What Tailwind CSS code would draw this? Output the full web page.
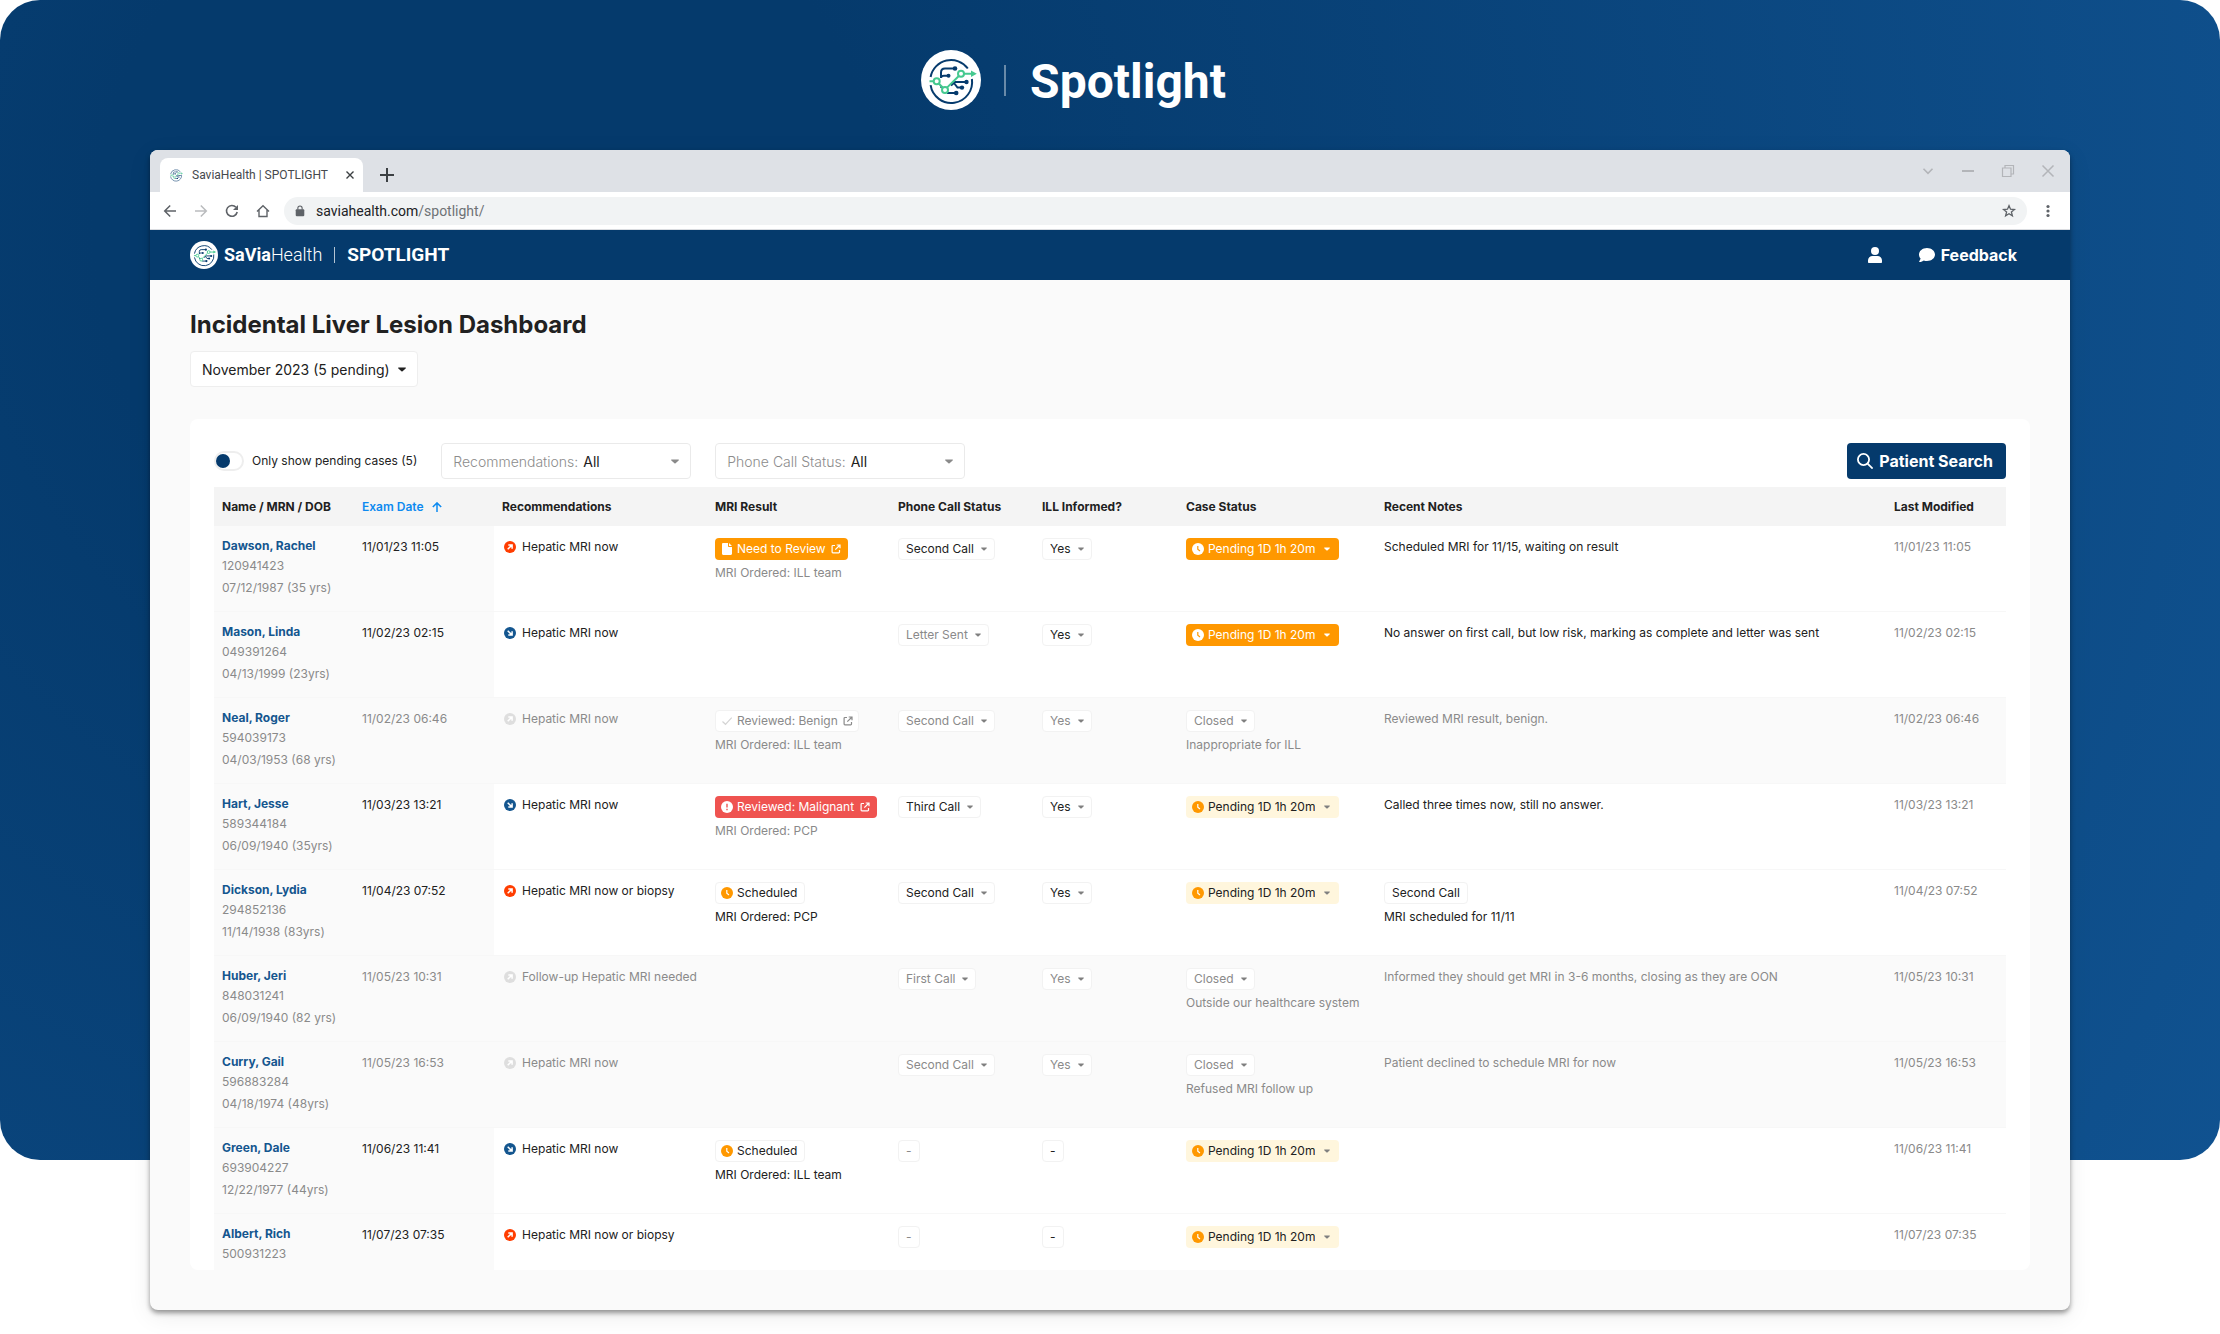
<!DOCTYPE html>
<html lang="en">
<head>
<meta charset="utf-8">
<meta name="viewport" content="width=device-width, initial-scale=1">
<title>SaviaHealth | SPOTLIGHT</title>
<script src="https://cdn.jsdelivr.net/npm/@tailwindcss/browser@4"></script>
</head>
<body class="bg-white font-['Inter',sans-serif] text-[#212121]">

<!-- Shared icons -->
<svg class="hidden" aria-hidden="true">
  <symbol id="logo" viewBox="0 0 60 60">
    <circle cx="30" cy="30" r="30" fill="#fff"/>
    <g fill="none" stroke="#063b6d" stroke-width="2">
      <path d="M9.6 27A20.8 20.8 0 0 1 46.800 18.500"/>
      <path d="M9.6 35.200A20.8 20.8 0 0 0 50.900 29"/>
      <path d="M20 28V22.500Q20 18.500 24 18.500H33M20 28Q20 25.700 23 25.700H27M45 32H34L30 35.500M33 33L36.500 37.600H40.500M35 43H26"/>
    </g>
    <g fill="#063b6d"><circle cx="34" cy="18.500" r="2.300"/><circle cx="27.500" cy="25.700" r="2"/><circle cx="45.500" cy="32" r="2.200"/><circle cx="41" cy="37.600" r="2.200"/><circle cx="35.200" cy="43" r="2.300"/><circle cx="20.500" cy="37" r="1.300"/></g>
    <g fill="#fff" stroke="#45c98f" stroke-width="2">
      <path d="M8.500 31.300H13M17.800 33.500L21.800 37.800M26 37.600L37.800 26M43 23.700H51" fill="none"/>
      <circle cx="15.700" cy="31.300" r="3"/><circle cx="24" cy="40" r="3"/><circle cx="40" cy="23.700" r="3"/>
    </g>
    <path d="M50 20.500L55.800 23.700L50 27z" fill="#45c98f"/>
  </symbol>
  <symbol id="caret" viewBox="0 0 10 6"><path d="M.8.6h8.400c.6 0 .8.6.4 1L5.700 5.300a1 1 0 0 1-1.400 0L.4 1.600C0 1.200.2.600.8.600z" fill="currentColor"/></symbol>
  <symbol id="clock" viewBox="0 0 12 12"><circle cx="6" cy="6" r="6" fill="currentColor"/><path d="M5.800 3v3.300L8 7.900" fill="none" stroke="var(--hand)" stroke-width="1.200"/></symbol>
  <symbol id="up" viewBox="0 0 12 12"><circle cx="6" cy="6" r="6" fill="currentColor"/><path d="M3.700 8.300L7.600 4.400M4.300 3.900H8.100V7.700" fill="none" stroke="#fff" stroke-width="1.500"/></symbol>
  <symbol id="down" viewBox="0 0 12 12"><circle cx="6" cy="6" r="6" fill="currentColor"/><path d="M3.700 3.700L7.600 7.600M8.100 4.300V8.100H4.300" fill="none" stroke="#fff" stroke-width="1.500"/></symbol>
  <symbol id="file" viewBox="0 0 10 12"><path d="M1.200 0H6v3.200c0 .5.300.8.800.8H10v6.800c0 .7-.5 1.200-1.200 1.200H1.200C.5 12 0 11.500 0 10.800V1.200C0 .5.500 0 1.200 0zM7 0l3 3H7z" fill="currentColor"/></symbol>
  <symbol id="check" viewBox="0 0 12 12"><path d="M1.500 6.500L4.500 9.300L10.700 2.700" fill="none" stroke="#d4d4d4" stroke-width="1.200"/></symbol>
  <symbol id="alert" viewBox="0 0 12 12"><circle cx="6" cy="6" r="6" fill="currentColor"/><path d="M6 2.800v3.800M6 7.800v1.400" fill="none" stroke="#ef5350" stroke-width="1.400"/></symbol>
  <symbol id="ext" viewBox="0 0 10 10"><path d="M4 1.500H1.900a.8.800 0 0 0-.8.800v5.800c0 .4.400.8.800.8h5.800c.4 0 .8-.4.800-.8V6M5.700 1h3.300v3.300M9 1L4.300 5.700" fill="none" stroke="currentColor" stroke-width="1.200"/></symbol>
</svg>

<div class="grid h-screen">
  <div class="col-start-1 row-start-1 mb-[174px] rounded-[40px] bg-[radial-gradient(circle_at_22%_20%,#053a6c_20%,#105290_100%)]"></div>

  <div class="col-start-1 row-start-1 flex min-h-0 flex-col px-[150px] pb-6">
    <header class="flex shrink-0 items-center justify-center pt-[50px] pb-10 pr-[73px]">
      <svg class="size-[60px]" aria-hidden="true"><use href="#logo"/></svg>
      <span class="ml-[23px] h-[31px] w-0.5 bg-white/40"></span>
      <h2 class="ml-6 pt-1 font-['Roboto',sans-serif] text-[48px] leading-[56px] font-bold text-white">Spotlight</h2>
    </header>

    <!-- Browser window -->
    <div class="flex min-h-0 flex-1 flex-col overflow-hidden rounded-lg bg-[#fafafa] shadow-[0_3px_5px_rgba(0,0,0,0.4),0_6px_24px_rgba(0,0,0,0.08)]">
      <div class="flex h-[42px] shrink-0 items-end bg-[#dee1e6] pl-2.5 pr-[15px] font-['Roboto',sans-serif]">
        <div class="flex h-[34px] w-[203px] items-center rounded-t-lg bg-white pl-2 pr-[7px]">
          <svg class="size-4 shrink-0" aria-hidden="true"><use href="#logo"/></svg>
          <span class="ml-2 flex-1 text-xs leading-5 whitespace-nowrap text-[#45494d]">SaviaHealth | SPOTLIGHT</span>
          <button class="p-0.5 text-[#3c4043]" aria-label="Close tab"><svg class="size-2" viewBox="0 0 8 8" aria-hidden="true"><path d="M.5.5l7 7M7.500.5l-7 7" stroke="currentColor" stroke-width="1.400"/></svg></button>
        </div>
        <button class="mb-2.5 ml-[17px] text-[#3c4043]" aria-label="New tab"><svg class="size-3.5" viewBox="0 0 14 14" aria-hidden="true"><path d="M7 0v14M0 7h14" stroke="currentColor" stroke-width="2"/></svg></button>
        <div class="mb-3.5 ml-auto flex items-center gap-[26px] text-[#b3b5b9]">
          <button aria-label="Search tabs"><svg class="size-3.5" viewBox="0 0 14 14" fill="none" stroke="currentColor" stroke-width="1.600" aria-hidden="true"><path d="M2.500 4.700L7 9.300l4.500-4.600"/></svg></button>
          <button aria-label="Minimize"><svg class="size-3.5" viewBox="0 0 14 14" fill="none" stroke="currentColor" stroke-width="1.800" aria-hidden="true"><path d="M1 7h12"/></svg></button>
          <button aria-label="Restore"><svg class="size-3.5" viewBox="0 0 14 14" fill="none" stroke="currentColor" stroke-width="1.200" aria-hidden="true"><path d="M1.500 4h8.500v8.500H1.500zM4 4V1.500h8.500V10H10"/></svg></button>
          <button aria-label="Close window"><svg class="size-3.5" viewBox="0 0 14 14" fill="none" stroke="currentColor" stroke-width="1.500" aria-hidden="true"><path d="M1.500 1.500l11 11M12.500 1.500l-11 11"/></svg></button>
        </div>
      </div>

      <div class="flex h-[38px] shrink-0 items-center border-b border-[#dadce0] bg-white pl-3 pr-3.5 font-['Roboto',sans-serif] text-[#5f6368]">
        <div class="flex items-center gap-[15px]">
          <button aria-label="Back"><svg class="size-4" viewBox="0 0 16 16" fill="none" stroke="currentColor" stroke-width="1.500" aria-hidden="true"><path d="M14 8H3M8.200 2.500L2.700 8l5.500 5.500"/></svg></button>
          <button class="text-[#babcbe]" aria-label="Forward"><svg class="size-4" viewBox="0 0 16 16" fill="none" stroke="currentColor" stroke-width="1.500" aria-hidden="true"><path d="M2 8h11M7.800 2.500L13.300 8l-5.500 5.500"/></svg></button>
          <button aria-label="Reload"><svg class="size-4" viewBox="0 0 16 16" fill="none" stroke="currentColor" stroke-width="1.600" aria-hidden="true"><path d="M13.200 9A5.400 5.400 0 1 1 12 4.300"/><path d="M14 2v5H9z" fill="currentColor" stroke="none"/></svg></button>
          <button aria-label="Home"><svg class="size-4" viewBox="0 0 16 16" fill="none" stroke="currentColor" stroke-width="1.400" aria-hidden="true"><path d="M2 8.500L8 2.700l6 5.800M4 7v6.500h8V7"/></svg></button>
        </div>
        <div class="ml-[13px] flex h-7 flex-1 items-center rounded-full bg-[#f1f3f4] px-2.5">
          <svg class="size-3" viewBox="0 0 12 14" aria-hidden="true"><path d="M2 5h8c.6 0 1 .4 1 1v6c0 .6-.4 1-1 1H2c-.6 0-1-.4-1-1V6c0-.6.400-1 1-1z" fill="currentColor"/><path d="M3.500 5.500V3.700a2.500 2.500 0 0 1 5 0v1.800" fill="none" stroke="currentColor" stroke-width="1.300"/></svg>
          <p class="ml-2.5 text-sm leading-5 text-[#6e7276]"><span class="text-[#202124]">saviahealth.com</span>/spotlight/</p>
          <button class="ml-auto" aria-label="Bookmark this page"><svg class="size-4" viewBox="0 0 16 16" fill="none" stroke="currentColor" stroke-width="1.300" aria-hidden="true"><path d="M8 2.600l1.500 3.600 3.900.3-3 2.500 1 3.800L8 10.800l-3.400 2 1-3.800-3-2.500 3.900-.3z"/></svg></button>
        </div>
        <button class="ml-[13px]" aria-label="Menu"><svg class="size-4" viewBox="0 0 16 16" fill="currentColor" aria-hidden="true"><circle cx="8" cy="3.500" r="1.600"/><circle cx="8" cy="8" r="1.600"/><circle cx="8" cy="12.500" r="1.600"/></svg></button>
      </div>

      <!-- App bar -->
      <nav class="flex h-[50px] shrink-0 items-center bg-[#053a6c] pl-10 pr-[53px] text-white">
        <a href="#" class="flex items-center font-['Roboto',sans-serif] text-lg leading-6">
          <svg class="size-7" aria-hidden="true"><use href="#logo"/></svg>
          <span class="ml-1.5"><b class="font-bold">SaVia</b><span class="font-light">Health</span></span>
          <span class="mx-3 h-4 w-px bg-white/70"></span>
          <span class="text-[19px] font-bold">SPOTLIGHT</span>
        </a>
        <a href="#" class="ml-auto" aria-label="Account"><svg class="h-4 w-3.5" viewBox="0 0 14 16" fill="currentColor" aria-hidden="true"><circle cx="7" cy="4" r="4"/><path d="M4.500 9h5A4.500 4.500 0 0 1 14 13.500V15.200c0 .5-.3.800-.8.800H.8c-.5 0-.8-.3-.8-.8V13.500A4.500 4.500 0 0 1 4.500 9z"/></svg></a>
        <a href="#" class="ml-[37px] flex items-center gap-1.5 text-base leading-6 font-bold"><svg class="size-4" viewBox="0 0 16 16" fill="currentColor" aria-hidden="true"><path d="M8 1c4.400 0 8 2.900 8 6.500S12.400 14 8 14c-1.200 0-2.200-.2-3.200-.6C3.800 14.200 2.200 15 .6 15c-.5 0-.7-.5-.4-.8 0 0 1-1 1.400-2.600C.6 10.400 0 9 0 7.500 0 3.900 3.600 1 8 1z"/></svg>Feedback</a>
      </nav>

      <main class="flex min-h-0 flex-1 flex-col items-start px-10 pt-7 pb-10">
        <h1 class="text-2xl leading-[34px] font-bold">Incidental Liver Lesion Dashboard</h1>
        <div class="mt-[9px] flex h-9 shrink-0 items-center gap-2 rounded border border-[#eeeeee] bg-white px-[11px] pt-px">
          <select class="field-sizing-content cursor-pointer appearance-none text-sm outline-none" aria-label="Month"><option>November 2023 (5 pending)</option><option>October 2023</option></select>
          <svg class="pointer-events-none h-[5px] w-2" aria-hidden="true"><use href="#caret"/></svg>
        </div>

        <section class="mt-8 min-h-0 w-full flex-1 overflow-hidden rounded-lg bg-white px-6 pt-6">
          <div class="flex h-9 items-center gap-6">
            <label class="flex cursor-pointer items-center gap-2 text-xs"><input type="checkbox" class="flex h-5 w-[30px] cursor-pointer appearance-none items-center rounded-full border-2 border-[#eeeeee] bg-white before:size-3.5 before:rounded-full before:bg-[#053a6c] checked:justify-end">Only show pending cases (5)</label>
            <label class="flex h-9 w-[250px] items-center rounded border border-[#eaeaea] px-[11px] pt-px text-sm"><span class="font-light text-[#8c8c8c]">Recommendations:</span><select class="ml-[5px] min-w-0 flex-1 appearance-none outline-none"><option>All</option><option>Hepatic MRI now</option></select><svg class="pointer-events-none h-[5px] w-2 shrink-0 text-[#8a8a8a]" aria-hidden="true"><use href="#caret"/></svg></label>
            <label class="flex h-9 w-[250px] items-center rounded border border-[#eaeaea] px-[11px] pt-px text-sm"><span class="font-light text-[#8c8c8c]">Phone Call Status:</span><select class="ml-[5px] min-w-0 flex-1 appearance-none outline-none"><option>All</option><option>First Call</option></select><svg class="pointer-events-none h-[5px] w-2 shrink-0 text-[#8a8a8a]" aria-hidden="true"><use href="#caret"/></svg></label>
            <button class="ml-auto flex h-9 items-center gap-1.5 rounded bg-[#053a6c] pl-2.5 pr-[13px] text-base font-bold text-white"><svg class="size-4" viewBox="0 0 16 16" fill="none" stroke="currentColor" stroke-width="1.800" aria-hidden="true"><circle cx="6.500" cy="6.500" r="5.600"/><path d="M10.600 10.600l5 5"/></svg>Patient Search</button>
          </div>

          <table class="mt-2 w-full table-fixed border-separate border-spacing-0 text-left text-xs">
            <thead>
              <tr class="h-[39px] bg-[#f4f4f4]">
                <th scope="col" class="w-[140px] px-2 font-bold">Name / MRN / DOB</th>
                <th scope="col" class="w-[140px] px-2 font-semibold text-[#0d8af0]"><span class="flex items-center gap-2">Exam Date<svg class="size-2.5" viewBox="0 0 10 10" fill="none" stroke="currentColor" stroke-width="1.500" aria-hidden="true"><path d="M5 10V1M.8 5L5 .9 9.200 5"/></svg></span></th>
                <th scope="col" class="w-[213px] px-2 font-bold">Recommendations</th>
                <th scope="col" class="w-[183px] px-2 font-bold">MRI Result</th>
                <th scope="col" class="w-36 px-2 font-bold">Phone Call Status</th>
                <th scope="col" class="w-36 px-2 font-bold">ILL Informed?</th>
                <th scope="col" class="w-[198px] px-2 font-bold">Case Status</th>
                <th scope="col" class="px-2 font-bold">Recent Notes</th>
                <th scope="col" class="w-[120px] px-2 font-bold">Last Modified</th>
              </tr>
            </thead>
            <tbody id="cases"></tbody>
          </table>
        </section>
      </main>
    </div>
  </div>
</div>

<script>
const cases = [
  { name: 'Dawson, Rachel', mrn: '120941423', dob: '07/12/1987 (35 yrs)', exam: '11/01/23 11:05', rec: 'Hepatic MRI now', dir: 'up', mri: 'review', ordered: 'ILL team', call: 'Second Call', ill: 'Yes', status: 'urgent', note: 'Scheduled MRI for 11/15, waiting on result' },
  { name: 'Mason, Linda', mrn: '049391264', dob: '04/13/1999 (23yrs)', exam: '11/02/23 02:15', rec: 'Hepatic MRI now', dir: 'down', call: 'Letter Sent', muted: true, ill: 'Yes', status: 'urgent', note: 'No answer on first call, but low risk, marking as complete and letter was sent' },
  { name: 'Neal, Roger', mrn: '594039173', dob: '04/03/1953 (68 yrs)', exam: '11/02/23 06:46', rec: 'Hepatic MRI now', dir: 'up', mri: 'benign', ordered: 'ILL team', call: 'Second Call', ill: 'Yes', closed: 'Inappropriate for ILL', note: 'Reviewed MRI result, benign.' },
  { name: 'Hart, Jesse', mrn: '589344184', dob: '06/09/1940 (35yrs)', exam: '11/03/23 13:21', rec: 'Hepatic MRI now', dir: 'down', mri: 'malignant', ordered: 'PCP', call: 'Third Call', ill: 'Yes', status: 'pending', note: 'Called three times now, still no answer.' },
  { name: 'Dickson, Lydia', mrn: '294852136', dob: '11/14/1938 (83yrs)', exam: '11/04/23 07:52', rec: 'Hepatic MRI now or biopsy', dir: 'up', mri: 'scheduled', ordered: 'PCP', call: 'Second Call', ill: 'Yes', status: 'pending', tag: 'Second Call', note: 'MRI scheduled for 11/11' },
  { name: 'Huber, Jeri', mrn: '848031241', dob: '06/09/1940 (82 yrs)', exam: '11/05/23 10:31', rec: 'Follow-up Hepatic MRI needed', dir: 'down', call: 'First Call', ill: 'Yes', closed: 'Outside our healthcare system', note: 'Informed they should get MRI in 3-6 months, closing as they are OON' },
  { name: 'Curry, Gail', mrn: '596883284', dob: '04/18/1974 (48yrs)', exam: '11/05/23 16:53', rec: 'Hepatic MRI now', dir: 'down', call: 'Second Call', ill: 'Yes', closed: 'Refused MRI follow up', note: 'Patient declined to schedule MRI for now' },
  { name: 'Green, Dale', mrn: '693904227', dob: '12/22/1977 (44yrs)', exam: '11/06/23 11:41', rec: 'Hepatic MRI now', dir: 'down', mri: 'scheduled', ordered: 'ILL team', call: '-', muted: true, ill: '-', status: 'pending', note: '' },
  { name: 'Albert, Rich', mrn: '500931223', dob: '', exam: '11/07/23 07:35', rec: 'Hepatic MRI now or biopsy', dir: 'up', call: '-', muted: true, ill: '-', status: 'pending', note: '' },
];

const icon = (id, cls) => `<svg class="${cls}" aria-hidden="true"><use href="#${id}"/></svg>`;

// Small drop-down chip; a value of "-" has nothing chosen and shows no caret.
const chip = (value, label, cls) => value === '-'
  ? `<button aria-label="${label}" class="flex h-[22px] w-fit items-center rounded border border-[#f2f2f2] bg-white px-[7px] ${cls}">-</button>`
  : `<div class="flex h-[22px] w-fit items-center gap-[7px] rounded border border-[#f2f2f2] bg-white px-[7px] ${cls}"><select aria-label="${label}" class="field-sizing-content appearance-none outline-none"><option>${value}</option></select>${icon('caret', 'pointer-events-none h-1 w-1.5 text-[#808080]')}</div>`;

const mriChips = {
  review: `<a href="#" class="flex h-[22px] w-fit items-center rounded bg-[#ff9800] px-[7px] text-white">${icon('file', 'h-3 w-2.5')}<span class="mx-[5px]">Need to Review</span>${icon('ext', 'size-2.5')}</a>`,
  benign: `<a href="#" class="flex h-[22px] w-fit items-center rounded border border-[#f2f2f2] bg-white px-[5px] text-[#8a8a8a]">${icon('check', 'size-3')}<span class="ml-1 mr-[5px]">Reviewed: Benign</span>${icon('ext', 'size-2.5')}</a>`,
  malignant: `<a href="#" class="flex h-[22px] w-fit items-center rounded bg-[#ef5350] pl-1.5 pr-[7px] text-white">${icon('alert', 'size-3')}<span class="ml-1 mr-[6px]">Reviewed: Malignant</span>${icon('ext', 'size-2.5')}</a>`,
  scheduled: `<span class="flex h-[22px] w-fit items-center gap-1 rounded border border-[#f2f2f2] bg-white pl-[5px] pr-[7px]">${icon('clock', 'size-3 text-[#ff9800] [--hand:#fff]')}Scheduled</span>`,
};

const statusChip = kind => {
  const tone = kind === 'urgent' ? 'bg-[#ff9800] text-white' : 'bg-[#fff6dd]';
  const clock = kind === 'urgent' ? 'size-3 text-white [--hand:#ff9800]' : 'size-3 text-[#ff9800] [--hand:#fff]';
  const caret = kind === 'urgent' ? 'pointer-events-none ml-[5px] h-1 w-1.5 text-white' : 'pointer-events-none ml-[5px] h-1 w-1.5 text-[#808080]';
  return `<div class="flex h-[22px] w-fit items-center gap-1 rounded pl-1.5 pr-[9px] ${tone}">${icon('clock', clock)}<select aria-label="Case status" class="field-sizing-content appearance-none outline-none"><option>Pending 1D 1h 20m</option></select>${icon('caret', caret)}</div>`;
};

const sub = (text, cls) => `<p class="mt-[3px] leading-5 ${cls}">${text}</p>`;

document.getElementById('cases').innerHTML = cases.map(c => {
  const text = c.closed ? 'text-[#8a8a8a]' : 'text-[#212121]';
  const callText = c.closed || c.muted ? 'text-[#8a8a8a]' : 'text-[#212121]';
  const cell = 'border-b border-[#f7f7f7] px-2';
  const badge = c.closed ? 'text-[#dedede]' : c.dir === 'up' ? 'text-[#ff3d00]' : 'text-[#14568f]';
  return `<tr class="h-[86px] align-top leading-5 ${c.closed ? 'bg-[#fafafa]' : 'bg-white'} ${text}">
    <td class="${cell} bg-[#fafafa] pt-2.5"><a href="#" class="font-bold text-[#14568f]">${c.name}</a><p class="text-[#8a8a8a]">${c.mrn}</p><p class="leading-6 text-[#8a8a8a]">${c.dob}</p></td>
    <td class="${cell} bg-[#fafafa] pt-[11px]">${c.exam}</td>
    <td class="${cell} pt-[11px]"><div class="flex items-center gap-1.5 pl-0.5">${icon(c.closed ? 'up' : c.dir, 'size-3 ' + badge)}${c.rec}</div></td>
    <td class="${cell} pt-3">${c.mri ? mriChips[c.mri] + sub('MRI Ordered: ' + c.ordered, c.mri === 'scheduled' ? 'text-[#212121]' : 'text-[#8a8a8a]') : ''}</td>
    <td class="${cell} pt-3">${chip(c.call, 'Phone call status', callText)}</td>
    <td class="${cell} pt-3">${chip(c.ill, 'ILL informed', text)}</td>
    <td class="${cell} pt-3">${c.closed ? chip('Closed', 'Case status', text) + sub(c.closed, text) : statusChip(c.status)}</td>
    ${c.tag ? `<td class="${cell} pt-3"><span class="flex h-[22px] w-fit items-center rounded border border-[#f2f2f2] px-[7px]">${c.tag}</span>${sub(c.note, text)}</td>` : `<td class="${cell} pt-[11px]">${c.note}</td>`}
    <td class="${cell} pt-[11px] text-[#8a8a8a]">${c.exam}</td>
  </tr>`;
}).join('');
</script>
</body>
</html>
